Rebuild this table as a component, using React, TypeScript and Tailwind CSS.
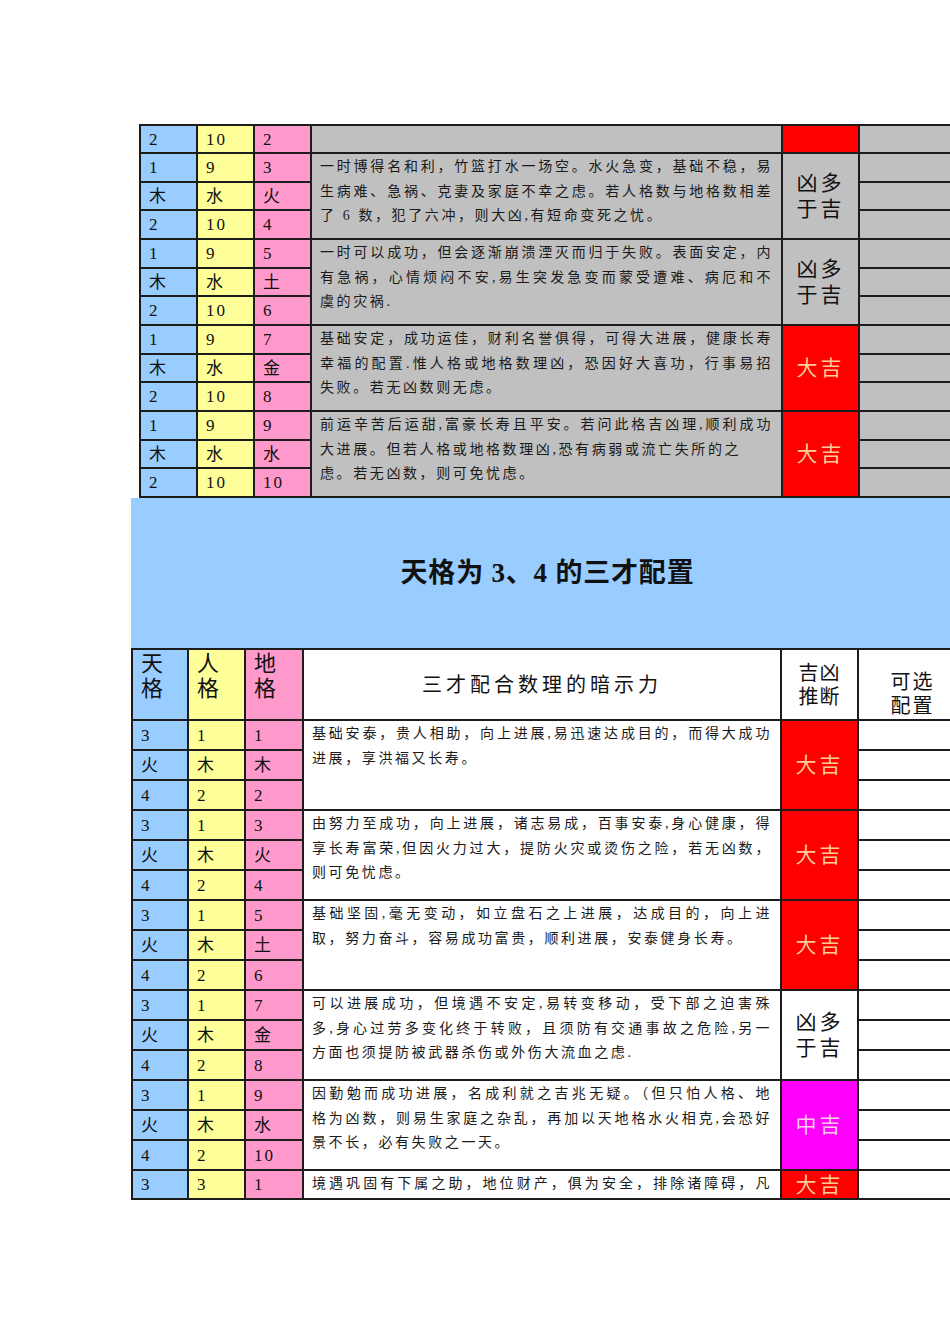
import React from "react";

type Judge = { text: string[]; bg: string; color: string };
type Line = { t: string; full?: boolean };
type Group = { rows: string[][]; heights: number[]; lines: Line[]; judge: Judge };

const RED_BIG: Judge = { text: ["大吉"], bg: "bg-[#ff0000]", color: "text-[#ffcc99]" };
const MID: Judge = { text: ["中吉"], bg: "bg-[#ff00ff]", color: "text-[#ffccee]" };

const topGroups: Group[] = [
  {
    rows: [["2", "10", "2"]],
    heights: [28],
    lines: [],
    judge: { text: [], bg: "bg-[#ff0000]", color: "" },
  },
  {
    rows: [["1", "9", "3"], ["木", "水", "火"], ["2", "10", "4"]],
    heights: [29, 28, 29],
    lines: [
      { t: "一时博得名和利，竹篮打水一场空。水火急变，基础不稳，易", full: true },
      { t: "生病难、急祸、克妻及家庭不幸之虑。若人格数与地格数相差", full: true },
      { t: "了 6 数，犯了六冲，则大凶,有短命变死之忧。" },
    ],
    judge: { text: ["凶多", "于吉"], bg: "bg-[#c0c0c0]", color: "text-[#111]" },
  },
  {
    rows: [["1", "9", "5"], ["木", "水", "土"], ["2", "10", "6"]],
    heights: [29, 28, 29],
    lines: [
      { t: "一时可以成功，但会逐渐崩溃湮灭而归于失败。表面安定，内", full: true },
      { t: "有急祸，心情烦闷不安,易生突发急变而蒙受遭难、病厄和不", full: true },
      { t: "虞的灾祸." },
    ],
    judge: { text: ["凶多", "于吉"], bg: "bg-[#c0c0c0]", color: "text-[#111]" },
  },
  {
    rows: [["1", "9", "7"], ["木", "水", "金"], ["2", "10", "8"]],
    heights: [29, 28, 29],
    lines: [
      { t: "基础安定，成功运佳，财利名誉俱得，可得大进展，健康长寿", full: true },
      { t: "幸福的配置.惟人格或地格数理凶，恐因好大喜功，行事易招", full: true },
      { t: "失败。若无凶数则无虑。" },
    ],
    judge: RED_BIG,
  },
  {
    rows: [["1", "9", "9"], ["木", "水", "水"], ["2", "10", "10"]],
    heights: [29, 28, 29],
    lines: [
      { t: "前运辛苦后运甜,富豪长寿且平安。若问此格吉凶理,顺利成功", full: true },
      { t: "大进展。但若人格或地格数理凶,恐有病弱或流亡失所的之" },
      { t: "虑。若无凶数，则可免忧虑。" },
    ],
    judge: RED_BIG,
  },
];

const bottomGroups: Group[] = [
  {
    rows: [["3", "1", "1"], ["火", "木", "木"], ["4", "2", "2"]],
    heights: [30, 30, 30],
    lines: [
      { t: "基础安泰，贵人相助，向上进展,易迅速达成目的，而得大成功", full: true },
      { t: "进展，享洪福又长寿。" },
    ],
    judge: RED_BIG,
  },
  {
    rows: [["3", "1", "3"], ["火", "木", "火"], ["4", "2", "4"]],
    heights: [30, 30, 30],
    lines: [
      { t: "由努力至成功，向上进展，诸志易成，百事安泰,身心健康，得", full: true },
      { t: "享长寿富荣,但因火力过大，提防火灾或烫伤之险，若无凶数，", full: true },
      { t: "则可免忧虑。" },
    ],
    judge: RED_BIG,
  },
  {
    rows: [["3", "1", "5"], ["火", "木", "土"], ["4", "2", "6"]],
    heights: [30, 30, 30],
    lines: [
      { t: "基础坚固,毫无变动，如立盘石之上进展，达成目的，向上进", full: true },
      { t: "取，努力奋斗，容易成功富贵，顺利进展，安泰健身长寿。" },
    ],
    judge: RED_BIG,
  },
  {
    rows: [["3", "1", "7"], ["火", "木", "金"], ["4", "2", "8"]],
    heights: [30, 30, 30],
    lines: [
      { t: "可以进展成功，但境遇不安定,易转变移动，受下部之迫害殊", full: true },
      { t: "多,身心过劳多变化终于转败，且须防有交通事故之危险,另一", full: true },
      { t: "方面也须提防被武器杀伤或外伤大流血之虑." },
    ],
    judge: { text: ["凶多", "于吉"], bg: "bg-white", color: "text-[#111]" },
  },
  {
    rows: [["3", "1", "9"], ["火", "木", "水"], ["4", "2", "10"]],
    heights: [30, 30, 30],
    lines: [
      { t: "因勤勉而成功进展，名成利就之吉兆无疑。（但只怕人格、地", full: true },
      { t: "格为凶数，则易生家庭之杂乱，再加以天地格水火相克,会恐好", full: true },
      { t: "景不长，必有失败之一天。" },
    ],
    judge: MID,
  },
  {
    rows: [["3", "3", "1"]],
    heights: [29],
    lines: [{ t: "境遇巩固有下属之助，地位财产，俱为安全，排除诸障碍，凡", full: true }],
    judge: RED_BIG,
  },
];

const FONT = "font-['Liberation_Serif','Noto_Sans_CJK_SC',serif]";
const cell = "border-2 border-[#1c1c1c] p-0";
const colBg = ["bg-[#99ccff]", "bg-[#ffff99]", "bg-[#ff99cc]"];

function Rows({ groups, textBg }: { groups: Group[]; textBg: string }) {
  return (
    <>
      {groups.map((g, gi) =>
        g.rows.map((r, ri) => (
          <tr key={`${gi}-${ri}`} style={{ height: g.heights[ri] }}>
            {r.map((v, ci) => (
              <td key={ci} className={`${cell} ${colBg[ci]} pl-2 align-middle text-[17px] leading-none tracking-[2px] text-[#111]`}>
                {v}
              </td>
            ))}
            {ri === 0 && (
              <td rowSpan={g.rows.length} className={`${cell} ${textBg} align-top px-2 pt-[1px] text-[14px] leading-[24.5px] tracking-[2.6px] text-[#1a1a1a]`}>
                {g.lines.map((l, li) => (
                  <div key={li} className={`whitespace-nowrap ${l.full ? "text-justify [text-align-last:justify]" : ""}`}>
                    {l.t}
                  </div>
                ))}
              </td>
            )}
            {ri === 0 && (
              <td rowSpan={g.rows.length} className={`${cell} ${g.judge.bg} ${g.judge.color} text-center align-middle text-[21px] leading-[26px] tracking-[3px]`}>
                {g.judge.text.map((t, ti) => (
                  <div key={ti}>{t}</div>
                ))}
              </td>
            )}
            <td className={`${cell} ${textBg}`} />
          </tr>
        ))
      )}
    </>
  );
}

export default function App() {
  return (
    <div className={`w-[950px] min-h-[1344px] overflow-hidden bg-white ${FONT}`}>
      <div className="pt-[124px] pl-[139px]">
        <table className="table-fixed border-collapse w-[830px]">
          <colgroup>
            <col className="w-[57px]" />
            <col className="w-[57px]" />
            <col className="w-[57px]" />
            <col className="w-[471px]" />
            <col className="w-[77px]" />
            <col className="w-[111px]" />
          </colgroup>
          <tbody>
            <Rows groups={topGroups} textBg="bg-[#c0c0c0]" />
          </tbody>
        </table>
      </div>

      <div className="ml-[131px] h-[150px] bg-[#99ccff] flex items-center justify-center pl-[14px]">
        <h1 className="text-[27px] font-bold text-[#111] tracking-[0.8px]">天格为 3、4 的三才配置</h1>
      </div>

      <div className="pl-[131px]">
        <table className="table-fixed border-collapse w-[835px]">
          <colgroup>
            <col className="w-[56px]" />
            <col className="w-[57px]" />
            <col className="w-[58px]" />
            <col className="w-[478px]" />
            <col className="w-[77px]" />
            <col className="w-[109px]" />
          </colgroup>
          <tbody>
            <tr style={{ height: 71 }}>
              {["天格", "人格", "地格"].map((h, i) => (
                <td key={h} className={`${cell} ${colBg[i]} align-top pl-[8px] pt-[1px] text-[22px] leading-[25px] text-[#111]`}>
                  <div>{h[0]}</div>
                  <div>{h[1]}</div>
                </td>
              ))}
              <td className={`${cell} bg-white text-center align-middle text-[20px] tracking-[4px] text-[#111]`}>三才配合数理的暗示力</td>
              <td className={`${cell} bg-white text-center align-middle text-[20px] leading-[24px] tracking-[1px] text-[#111]`}>
                <div>吉凶</div>
                <div>推断</div>
              </td>
              <td className={`${cell} bg-white text-center align-bottom pb-[1px] text-[20px] leading-[24px] tracking-[2px] text-[#111]`}>
                <div>可选</div>
                <div>配置</div>
              </td>
            </tr>
            <Rows groups={bottomGroups} textBg="bg-white" />
          </tbody>
        </table>
      </div>
    </div>
  );
}
